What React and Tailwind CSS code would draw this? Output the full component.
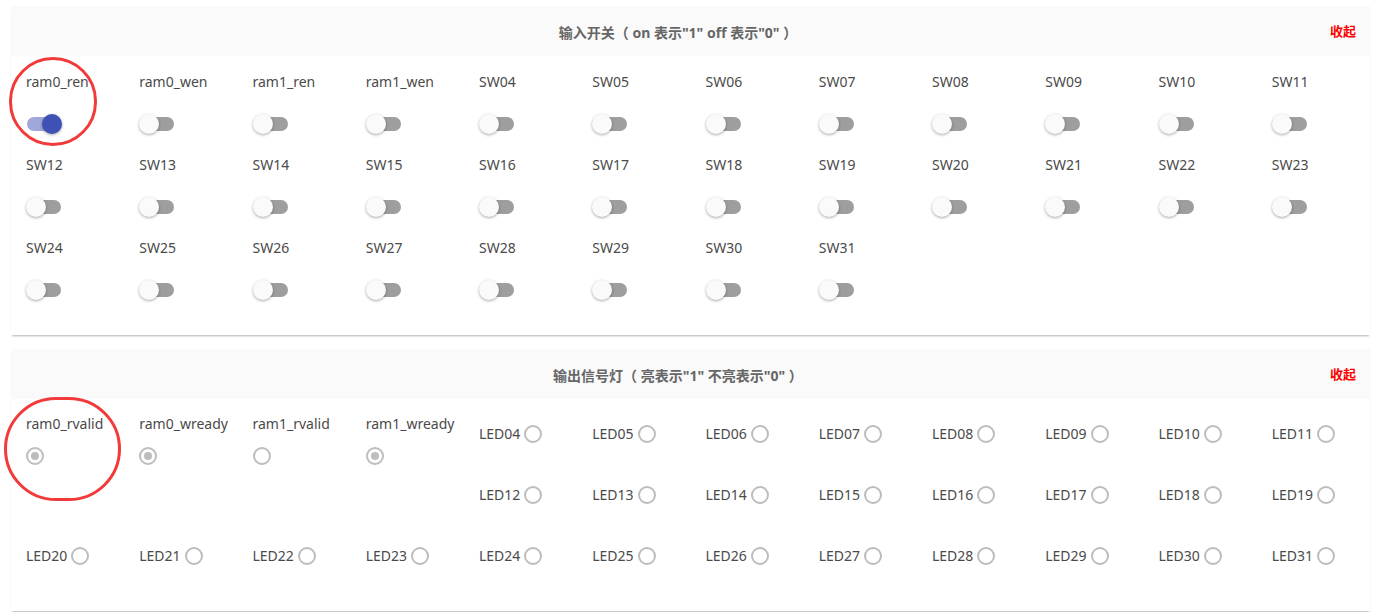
import React from 'react';

const inputs = [
  'ram0_ren', 'ram0_wen', 'ram1_ren', 'ram1_wen',
  ...Array.from({ length: 28 }, (_, i) => 'SW' + String(i + 4).padStart(2, '0')),
];

const outputs = [
  { name: 'ram0_rvalid', on: true },
  { name: 'ram0_wready', on: true },
  { name: 'ram1_rvalid', on: false },
  { name: 'ram1_wready', on: true },
];

const leds = Array.from({ length: 28 }, (_, i) => 'LED' + String(i + 4).padStart(2, '0'));

const Toggle = ({ on }) => (
  <div className="relative h-5 w-[36px]">
    <div
      className={
        'absolute left-[1px] top-[3px] h-[14px] w-[34px] rounded-full ' +
        (on ? 'bg-[#9fa8da]' : 'bg-[#9e9e9e]')
      }
    />
    <div
      className={
        'absolute top-0 h-5 w-5 rounded-full shadow-[0_1px_3px_rgba(0,0,0,0.35)] ' +
        (on ? 'left-[16px] bg-[#3f51b5]' : 'left-0 bg-[#fafafa]')
      }
    />
  </div>
);

const Radio = ({ on }) => (
  <div className="flex h-[18px] w-[18px] items-center justify-center rounded-full border-2 border-[#bdbdbd]">
    {on && <div className="h-2 w-2 rounded-full bg-[#bdbdbd]" />}
  </div>
);

const Header = ({ title }) => (
  <div className="flex h-[50px] items-center bg-[#fafafa] pt-[2px]">
    <div className="flex-1 pl-[15px] text-center text-[14px] font-bold text-[#666]">{title}</div>
    <div className="pr-[14px] text-[13px] font-bold text-[#ff0000]">收起</div>
  </div>
);

const App = () => {
  return (
    <div
      className="relative min-h-[612px] bg-white pt-[6px] text-[#4a4a4a]"
      style={{ fontFamily: '"Noto Sans", "Noto Sans CJK SC", sans-serif' }}
    >
      <div className="ml-[11px] w-[1359px] bg-white shadow-[0_2px_2px_-1px_rgba(0,0,0,0.3)]">
        <Header title={'输入开关（ on 表示"1" off 表示"0" ）'} />
        <div className="grid grid-cols-12 pb-[30px]">
          {inputs.map((name, i) => (
            <div key={name} className="h-[83px] px-[15px] pt-[16px]">
              <div className="text-[14px] leading-5">{name}</div>
              <div className="mt-[22px]">
                <Toggle on={i === 0} />
              </div>
            </div>
          ))}
        </div>
      </div>

      <div className="ml-[11px] mt-[14px] w-[1359px] bg-white shadow-[0_2px_2px_-1px_rgba(0,0,0,0.3)]">
        <Header title={'输出信号灯（ 亮表示"1" 不亮表示"0" ）'} />
        <div className="grid grid-cols-12 pb-[29px]">
          {outputs.map((o) => (
            <div key={o.name} className="row-span-2 h-[122px] px-[15px] pt-[15px]">
              <div className="text-[14px] leading-5">{o.name}</div>
              <div className="mt-[13px]">
                <Radio on={o.on} />
              </div>
            </div>
          ))}
          {leds.map((name) => (
            <div key={name} className="flex h-[61px] items-center px-[15px] pt-[9px]">
              <span className="text-[14px] leading-5">{name}</span>
              <div className="ml-[4px]">
                <Radio on={false} />
              </div>
            </div>
          ))}
        </div>
      </div>

      <div className="pointer-events-none absolute left-[9px] top-[57px] h-[89px] w-[88px] rounded-full border-[3px] border-[#f23a3a]" />
      <div className="pointer-events-none absolute left-[4px] top-[397px] h-[104px] w-[117px] rounded-full border-[3px] border-[#f23a3a]" />
    </div>
  );
};

export default App;
